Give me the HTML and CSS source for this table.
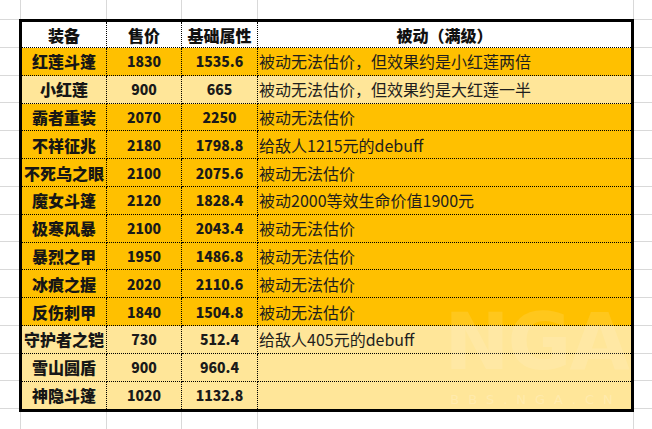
FILE: index.html
```html
<!DOCTYPE html>
<html lang="zh-CN">
<head>
<meta charset="utf-8">
<title>装备</title>
<link rel="stylesheet" href="styles.css">
</head>
<body>
<div class="sheet">
  <div class="table">
    <div class="cell head">装备</div><div class="cell head">售价</div><div class="cell head">基础属性</div><div class="cell head last">被动（满级）</div>

    <div class="cell name dark">红莲斗篷</div><div class="cell num dark">1830</div><div class="cell num dark">1535.6</div><div class="cell desc dark last">被动无法估价，但效果约是小红莲两倍</div>
    <div class="cell name light">小红莲</div><div class="cell num light">900</div><div class="cell num light">665</div><div class="cell desc light last">被动无法估价，但效果约是大红莲一半</div>
    <div class="cell name dark">霸者重装</div><div class="cell num dark">2070</div><div class="cell num dark">2250</div><div class="cell desc dark last">被动无法估价</div>
    <div class="cell name dark">不祥征兆</div><div class="cell num dark">2180</div><div class="cell num dark">1798.8</div><div class="cell desc dark last">给敌人1215元的debuff</div>
    <div class="cell name dark">不死乌之眼</div><div class="cell num dark">2100</div><div class="cell num dark">2075.6</div><div class="cell desc dark last">被动无法估价</div>
    <div class="cell name dark">魔女斗篷</div><div class="cell num dark">2120</div><div class="cell num dark">1828.4</div><div class="cell desc dark last">被动2000等效生命价值1900元</div>
    <div class="cell name dark">极寒风暴</div><div class="cell num dark">2100</div><div class="cell num dark">2043.4</div><div class="cell desc dark last">被动无法估价</div>
    <div class="cell name dark">暴烈之甲</div><div class="cell num dark">1950</div><div class="cell num dark">1486.8</div><div class="cell desc dark last">被动无法估价</div>
    <div class="cell name dark">冰痕之握</div><div class="cell num dark">2020</div><div class="cell num dark">2110.6</div><div class="cell desc dark last">被动无法估价</div>
    <div class="cell name dark">反伤刺甲</div><div class="cell num dark">1840</div><div class="cell num dark">1504.8</div><div class="cell desc dark last">被动无法估价</div>
    <div class="cell name light">守护者之铠</div><div class="cell num light">730</div><div class="cell num light">512.4</div><div class="cell desc light last">给敌人405元的debuff</div>
    <div class="cell name light">雪山圆盾</div><div class="cell num light">900</div><div class="cell num light">960.4</div><div class="cell desc light last"></div>
    <div class="cell name light bottom">神隐斗篷</div><div class="cell num light bottom">1020</div><div class="cell num light bottom">1132.8</div><div class="cell desc light last bottom"></div>
  </div>
  <div class="watermark">
    <div class="wm-logo">NGA</div>
    <div class="wm-url">BBS.NGA.CN</div>
  </div>
</div>
</body>
</html>
```
FILE: styles.css
```css
html, body {
  margin: 0;
  padding: 0;
  background: #ffffff;
}

.sheet {
  position: relative;
  width: 652px;
  height: 429px;
  overflow: hidden;
  padding: 19px 0 0 19px;
  box-sizing: border-box;
  background-color: #ffffff;
  background-image:
    linear-gradient(to right,
      transparent 0 20px, #d9d9d9 20px 21px,
      transparent 21px 106px, #d9d9d9 106px 107px,
      transparent 107px 181px, #d9d9d9 181px 182px,
      transparent 182px 257px, #d9d9d9 257px 258px,
      transparent 258px 633px, #d9d9d9 633px 634px,
      transparent 634px),
    repeating-linear-gradient(to bottom,
      transparent 0 19px, #d9d9d9 19px 20px, transparent 20px 27.8px);
  font-family: "Noto Sans CJK SC", "Noto Sans", sans-serif;
  color: #1c1c1c;
}

.table {
  width: 609px;
  border: 3px solid #000000;
  display: grid;
  grid-template-columns: 85px 75px 76px 373px;
  grid-template-rows: 26px repeat(13, 27.8px);
  background: #ffffff;
}

.cell {
  box-sizing: border-box;
  border-right: 1px dotted #000000;
  border-bottom: 1px dotted #000000;
  display: flex;
  align-items: center;
  justify-content: center;
  white-space: nowrap;
  overflow: hidden;
  line-height: 1;
}

.cell.last {
  border-right: none;
}

.cell.bottom {
  border-bottom: none;
}

.head {
  background: #ffffff;
  font-weight: 900;
  font-size: 16px;
  color: #111111;
}

.name {
  font-weight: 900;
  font-size: 16px;
  color: #161616;
}

.num {
  font-weight: 900;
  font-size: 14px;
  color: #1a1a1a;
}

.desc {
  justify-content: flex-start;
  padding-left: 1px;
  font-size: 16px;
  font-weight: 400;
  color: #1e1e1e;
}

.dark {
  background: #ffc000;
}

.light {
  background: #ffe699;
}

.watermark {
  position: absolute;
  left: 440px;
  top: 296px;
  width: 192px;
  display: flex;
  flex-direction: column;
  align-items: center;
  pointer-events: none;
}

.wm-logo {
  font-family: "DejaVu Sans", sans-serif;
  font-weight: 700;
  font-size: 78px;
  line-height: 92px;
  letter-spacing: -2px;
  color: rgba(255, 255, 255, 0.11);
}

.wm-url {
  font-family: "DejaVu Sans", sans-serif;
  font-size: 13px;
  letter-spacing: 9px;
  color: rgba(255, 255, 255, 0.2);
  margin-top: 4px;
}
```
